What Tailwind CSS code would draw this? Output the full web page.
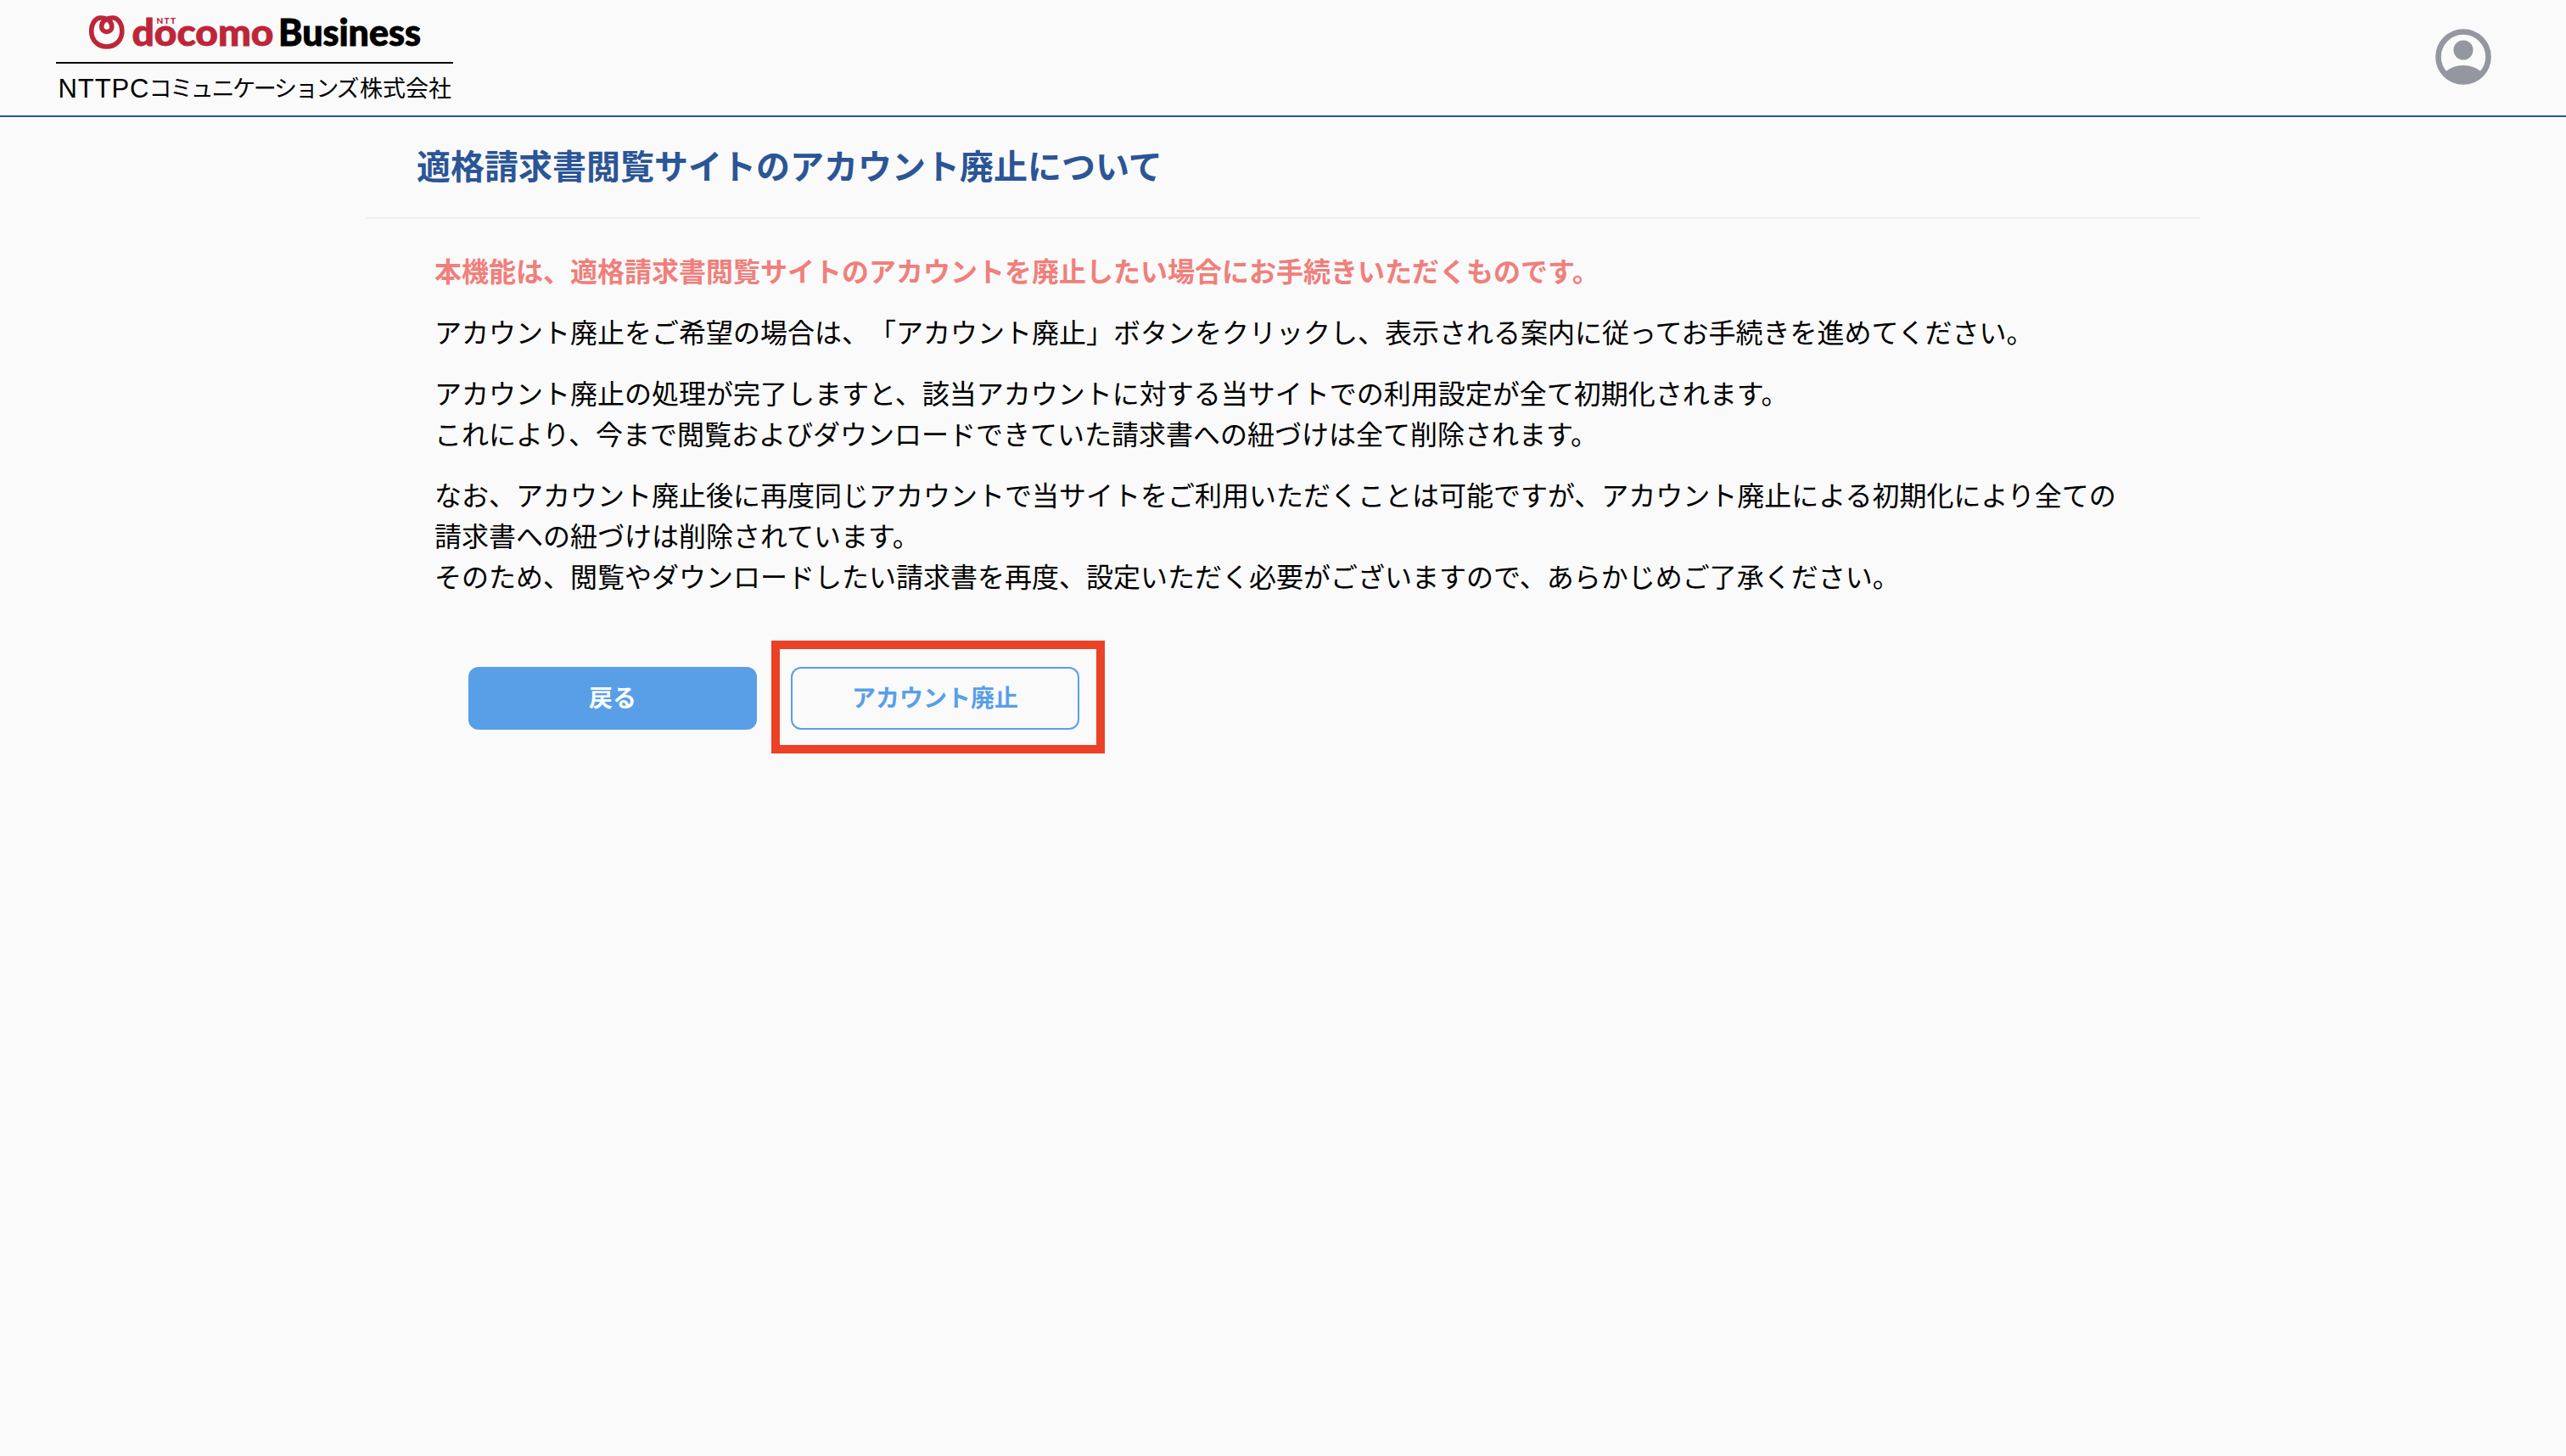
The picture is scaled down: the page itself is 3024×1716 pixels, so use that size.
<!DOCTYPE html>
<html lang="ja">

<head>
  <meta charset="UTF-8">
  <meta name="viewport" content="width=device-width, initial-scale=1.0">
  <title>適格請求書閲覧サイト</title>
  <script src="https://cdn.jsdelivr.net/npm/@tailwindcss/browser@4"></script>
</head>

<body class="bg-[#fafafa] min-h-screen text-black font-['Noto_Sans_CJK_JP',sans-serif] [text-spacing-trim:space-all]">
  <header class="h-[138px] border-b-2 border-[#2b5596] flex items-start justify-between pl-[66px] pr-[88px]">
    <svg class="w-[468px] h-[130px]" viewBox="66 0 468 130" role="img" aria-label="docomo Business">
      <!-- loop mark -->
      <g fill="none" stroke="#bd2639" stroke-width="5.6">
        <path d="M125.700 22.500C122.500 20.800 120 21 118.500 21C113 21 107.700 27 107.700 37C107.700 48 116 55 125.700 55C135.500 55 143.800 48 143.800 37C143.800 27 138.500 21 133 21C131.500 21 129 20.800 125.700 22.500" />
        <path d="M125.700 22.500C121.500 24.500 119.700 28 119.700 31.500C119.700 35 122.300 37.500 125.700 37.500C129.200 37.500 131.800 35 131.800 31.500C131.800 28 130 24.500 125.700 22.500" />
      </g>
      <g font-family="Lato" font-weight="900">
        <text x="155.500" y="54.300" fill="#bd2639" stroke="#bd2639" stroke-width="0.9" font-size="43.500" textLength="167" lengthAdjust="spacingAndGlyphs">docomo</text>
        <text x="184.500" y="28" fill="#bd2639" font-size="10" textLength="22.500" lengthAdjust="spacing">NTT</text>
        <text x="328" y="54.300" stroke="#000" stroke-width="0.9" font-size="43" textLength="168" lengthAdjust="spacingAndGlyphs">Business</text>
      </g>
      <rect x="66" y="73" width="468" height="2" />
      <text x="68.500" y="115" font-family="Liberation Sans" font-size="31" textLength="107" lengthAdjust="spacing">NTTPC</text>
      <g font-family="Noto Sans CJK JP" font-size="27">
        <text x="175.500" y="113.500" textLength="248" lengthAdjust="spacing">コミュニケーションズ</text>
        <text x="424" y="113.500" textLength="108" lengthAdjust="spacing">株式会社</text>
      </g>
    </svg>
    <button class="mt-[34px]" aria-label="アカウント">
      <svg class="w-[66px] h-[66px]" viewBox="0 0 66 66">
        <circle cx="33" cy="33" r="29.500" fill="none" stroke="#9496a0" stroke-width="6.600" />
        <circle cx="33" cy="25" r="11.500" fill="#9496a0" />
        <path d="M12 50.500C17 46 25 43 33 43S49 46 54 50.500C49 58 42 63 33 63S17 58 12 50.500Z" fill="#9496a0" />
      </svg>
    </button>
  </header>

  <main class="w-[2160px] mx-auto">
    <h1 class="h-[120px] pl-[59px] border-b-2 border-[#eee] text-[40px] leading-[112px] font-bold text-[#2b5596]">適格請求書閲覧サイトのアカウント廃止について</h1>
    <div class="pt-9 px-20 space-y-6 text-[32px] leading-[48px]">
      <p class="font-bold text-[#f07f7b]">本機能は、適格請求書閲覧サイトのアカウントを廃止したい場合にお手続きいただくものです。</p>
      <p>アカウント廃止をご希望の場合は、「アカウント廃止」ボタンをクリックし、表示される案内に従ってお手続きを進めてください。</p>
      <p>アカウント廃止の処理が完了しますと、該当アカウントに対する当サイトでの利用設定が全て初期化されます。<br>これにより、今まで閲覧およびダウンロードできていた請求書への紐づけは全て削除されます。</p>
      <p>なお、アカウント廃止後に再度同じアカウントで当サイトをご利用いただくことは可能ですが、アカウント廃止による初期化により全ての<br>請求書への紐づけは削除されています。<br>そのため、閲覧やダウンロードしたい請求書を再度、設定いただく必要がございますので、あらかじめご了承ください。</p>
    </div>
    <div class="flex items-start pl-[120px] mt-[53px]">
      <button class="mt-[31px] w-[340px] h-[74px] pb-1 rounded-xl bg-[#589fe8] text-white text-[28px] font-bold">戻る</button>
      <div class="ml-[17px] w-[393px] h-[133px] border-10 border-[#eb4127] pl-[13px] pt-[21px]">
        <button class="w-[340px] h-[74px] pb-1 rounded-xl border-2 border-[#589fe8] text-[#589fe8] text-[28px] font-bold">アカウント廃止</button>
      </div>
    </div>
  </main>
</body>

</html>
